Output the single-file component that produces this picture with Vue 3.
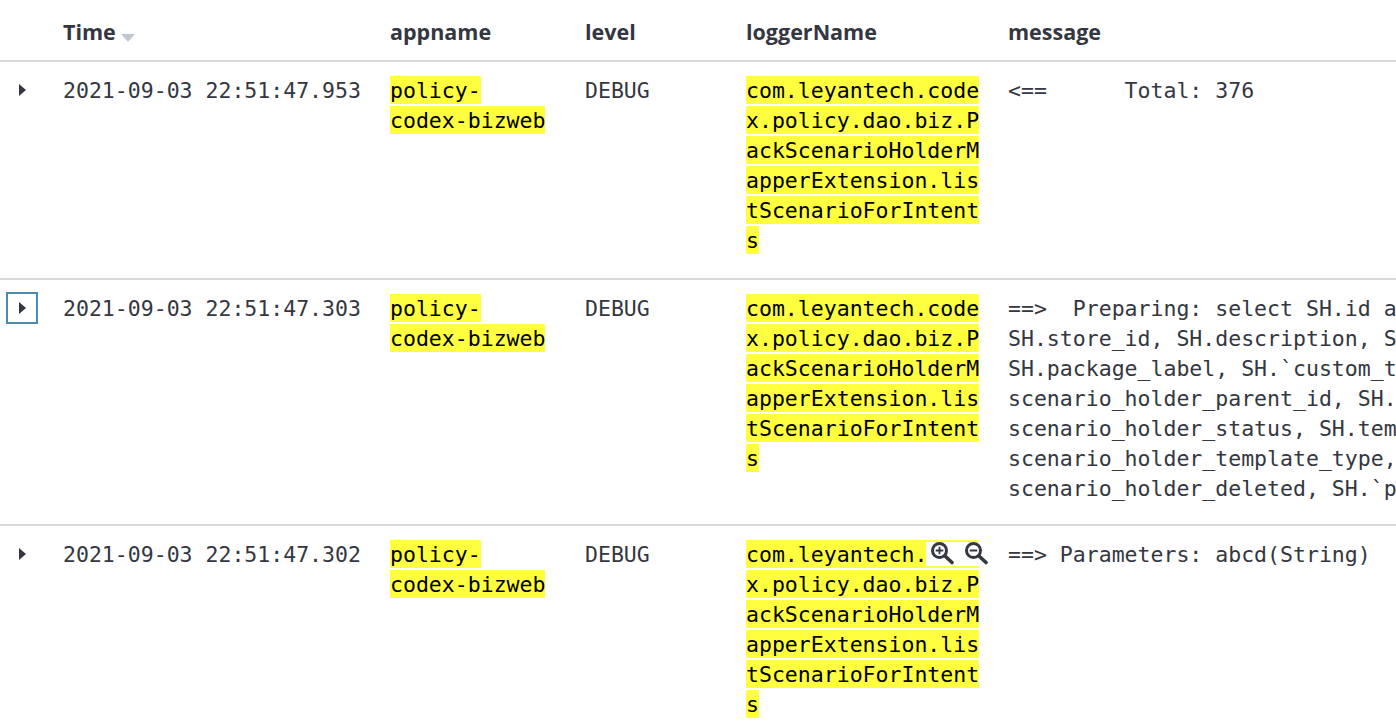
<template>
  <div class="doc-viewer">
    <table class="doc-table">
      <colgroup>
        <col class="col-toggle" />
        <col class="col-time" />
        <col class="col-app" />
        <col class="col-level" />
        <col class="col-logger" />
        <col class="col-message" />
      </colgroup>
      <thead>
        <tr>
          <th></th>
          <th>Time<span class="sort-caret"></span></th>
          <th>appname</th>
          <th>level</th>
          <th>loggerName</th>
          <th>message</th>
        </tr>
      </thead>
      <tbody>
        <tr v-for="row in rows" :key="row.time">
          <td class="toggle-cell">
            <button class="toggle" :class="{ focused: row.focused }" type="button">
              <span class="toggle-arrow"></span>
            </button>
          </td>
          <td>{{ row.time }}</td>
          <td class="app"><mark>{{ row.app }}</mark></td>
          <td>{{ row.level }}</td>
          <td class="logger">
            <mark>{{ row.logger }}</mark>
            <div v-if="row.hovered" class="cell-actions">
              <svg viewBox="0 0 23 23" width="23" height="23">
                <circle cx="8.5" cy="8.5" r="7" fill="none" stroke="#343741" stroke-width="3" />
                <path d="M14 14l7 6.5" fill="none" stroke="#343741" stroke-width="3.6" stroke-linecap="round" />
                <path d="M4.7 8.5h7.6M8.5 4.7v7.6" fill="none" stroke="#343741" stroke-width="1.8" />
              </svg>
              <svg viewBox="0 0 23 23" width="23" height="23">
                <circle cx="8.5" cy="8.5" r="7" fill="none" stroke="#343741" stroke-width="3" />
                <path d="M14 14l7 6.5" fill="none" stroke="#343741" stroke-width="3.6" stroke-linecap="round" />
                <path d="M4.7 8.5h7.6" fill="none" stroke="#343741" stroke-width="2" />
              </svg>
            </div>
          </td>
          <td class="message">{{ row.message }}</td>
        </tr>
      </tbody>
    </table>
  </div>
</template>

<script setup>
const logger = 'com.leyantech.codex.policy.dao.biz.PackScenarioHolderMapperExtension.listScenarioForIntents'

const rows = [
  {
    time: '2021-09-03 22:51:47.953',
    app: 'policy-codex-bizweb',
    level: 'DEBUG',
    logger,
    message: '<==      Total: 376',
  },
  {
    time: '2021-09-03 22:51:47.303',
    app: 'policy-codex-bizweb',
    level: 'DEBUG',
    logger,
    focused: true,
    message: [
      '==>  Preparing: select SH.id a',
      'SH.store_id, SH.description, S',
      'SH.package_label, SH.`custom_t',
      'scenario_holder_parent_id, SH.',
      'scenario_holder_status, SH.tem',
      'scenario_holder_template_type,',
      'scenario_holder_deleted, SH.`p',
    ].join('\n'),
  },
  {
    time: '2021-09-03 22:51:47.302',
    app: 'policy-codex-bizweb',
    level: 'DEBUG',
    logger,
    hovered: true,
    message: '==> Parameters: abcd(String)',
  },
]
</script>

<style scoped>
.doc-viewer {
  height: 726px;
  overflow: hidden;
  background: #fff;
}
.doc-table {
  width: 1396px;
  table-layout: fixed;
  border-collapse: separate;
  border-spacing: 0;
  color: #343741;
}
.col-toggle { width: 63px; }
.col-time { width: 327px; }
.col-app { width: 195px; }
.col-level { width: 161px; }
.col-logger { width: 262px; }
.col-message { width: 388px; }

th {
  height: 58px;
  padding: 2px 0 0;
  text-align: left;
  vertical-align: middle;
  font-family: "Open Sans", sans-serif;
  font-size: 21.5px;
  font-weight: 700;
  border-bottom: 2px solid #d9d9d9;
}
.sort-caret {
  display: inline-block;
  margin-left: 5px;
  border-top: 8px solid #c2c8d0;
  border-left: 7px solid transparent;
  border-right: 7px solid transparent;
  vertical-align: -2px;
}
td {
  position: relative;
  padding: 14px 0 22px;
  vertical-align: top;
  font-family: "DejaVu Sans Mono", monospace;
  font-size: 21.53px;
  line-height: 30px;
  border-bottom: 2px solid #d9d9d9;
}
mark {
  padding: 1.5px 0;
  background: #ffff40;
  color: #000;
}
.app {
  padding: 13px 30px 23px 0;
}
.logger {
  padding: 13px 28px 23px 0;
  word-break: break-all;
}
.message {
  padding-bottom: 20px;
  white-space: pre;
  overflow: hidden;
}
.toggle-cell {
  padding-top: 12px;
}
.toggle {
  display: flex;
  align-items: center;
  justify-content: center;
  width: 32px;
  height: 32px;
  margin: 0 0 0 6px;
  padding: 0;
  background: #fff;
  border: 2px solid transparent;
}
.toggle.focused {
  border-color: #4a8db3;
}
.toggle-arrow {
  border-left: 7.5px solid #343741;
  border-top: 6.5px solid transparent;
  border-bottom: 6.5px solid transparent;
}
.cell-actions {
  position: absolute;
  top: 16px;
  left: 180px;
  display: flex;
  gap: 11px;
  box-sizing: border-box;
  padding-left: 5px;
  width: 54px;
  height: 24px;
  background: #fff;
}
.cell-actions svg {
  flex: none;
}
</style>
